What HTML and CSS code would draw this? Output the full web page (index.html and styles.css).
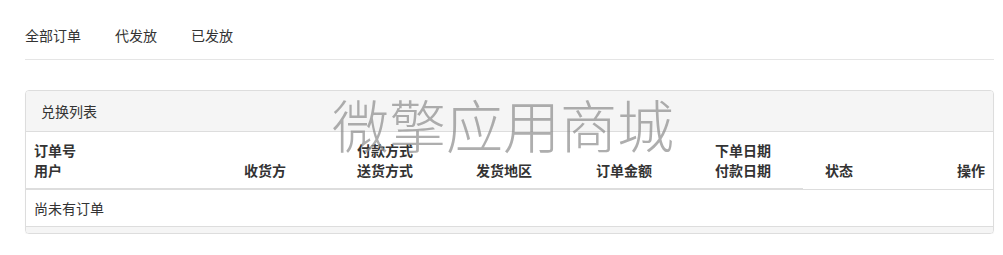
FILE: index.html
```html
<!DOCTYPE html>
<html lang="zh-CN">
<head>
    <meta charset="UTF-8">
    <title>兑换列表</title>
    <link rel="stylesheet" href="styles.css">
</head>
<body>
    <div class="page">
        <ul class="tabs">
            <li class="active">全部订单</li>
            <li>代发放</li>
            <li>已发放</li>
        </ul>

        <div class="panel">
            <div class="panel-heading">兑换列表</div>
            <table class="orders">
                <colgroup>
                    <col style="width: 210px">
                    <col style="width: 113px">
                    <col style="width: 119px">
                    <col style="width: 120px">
                    <col style="width: 119px">
                    <col style="width: 96px">
                    <col style="width: 102px">
                    <col>
                </colgroup>
                <thead>
                    <tr>
                        <th>订单号<br>用户</th>
                        <th>收货方</th>
                        <th>付款方式<br>送货方式</th>
                        <th>发货地区</th>
                        <th>订单金额</th>
                        <th>下单日期<br>付款日期</th>
                        <th class="status">状态</th>
                        <th class="ops">操作</th>
                    </tr>
                </thead>
                <tbody>
                    <tr>
                        <td colspan="8">尚未有订单</td>
                    </tr>
                </tbody>
            </table>
            <div class="panel-foot"></div>
        </div>

        <div class="watermark">微擎应用商城</div>
    </div>
</body>
</html>
```

FILE: styles.css
```css
body {
    margin: 0;
    background: #fff;
    color: #333;
    font-family: "Noto Sans CJK SC", "Noto Sans", sans-serif;
    font-size: 14px;
    line-height: 20px;
}

.page {
    position: relative;
    padding: 0 9px 0 25px;
}

.tabs {
    display: flex;
    gap: 34px;
    list-style: none;
    margin: 0 0 30px 0;
    padding: 25px 0 14px 0;
    border-bottom: 1px solid #e5e5e5;
}

.tabs li {
    cursor: pointer;
}

.panel {
    border: 1px solid #ddd;
    border-radius: 4px;
    box-shadow: 0 1px 1px rgba(0,0,0,0.05);
    overflow: hidden;
}

.panel-heading {
    background: #f5f5f5;
    padding: 10px 15px;
    border-bottom: 1px solid #ddd;
}

.orders {
    width: 100%;
    border-collapse: collapse;
    table-layout: fixed;
}

.orders th {
    text-align: left;
    vertical-align: bottom;
    font-weight: bold;
    padding: 8px;
    border-bottom: 2px solid #ddd;
}

.orders th.status {
    padding-left: 22px;
    border-bottom: 1px solid #ddd;
    padding-bottom: 9px;
}

.orders th.ops {
    text-align: right;
    border-bottom: 1px solid #ddd;
    padding-bottom: 9px;
}

.orders td {
    padding: 8px;
    border-bottom: 1px solid #ddd;
}

.panel-foot {
    height: 6px;
    background: #f5f5f5;
}

.watermark {
    position: absolute;
    left: 332px;
    top: 95px;
    font-size: 57px;
    line-height: 57px;
    font-weight: 300;
    color: rgba(140,140,140,0.7);
    white-space: nowrap;
    pointer-events: none;
}
```
